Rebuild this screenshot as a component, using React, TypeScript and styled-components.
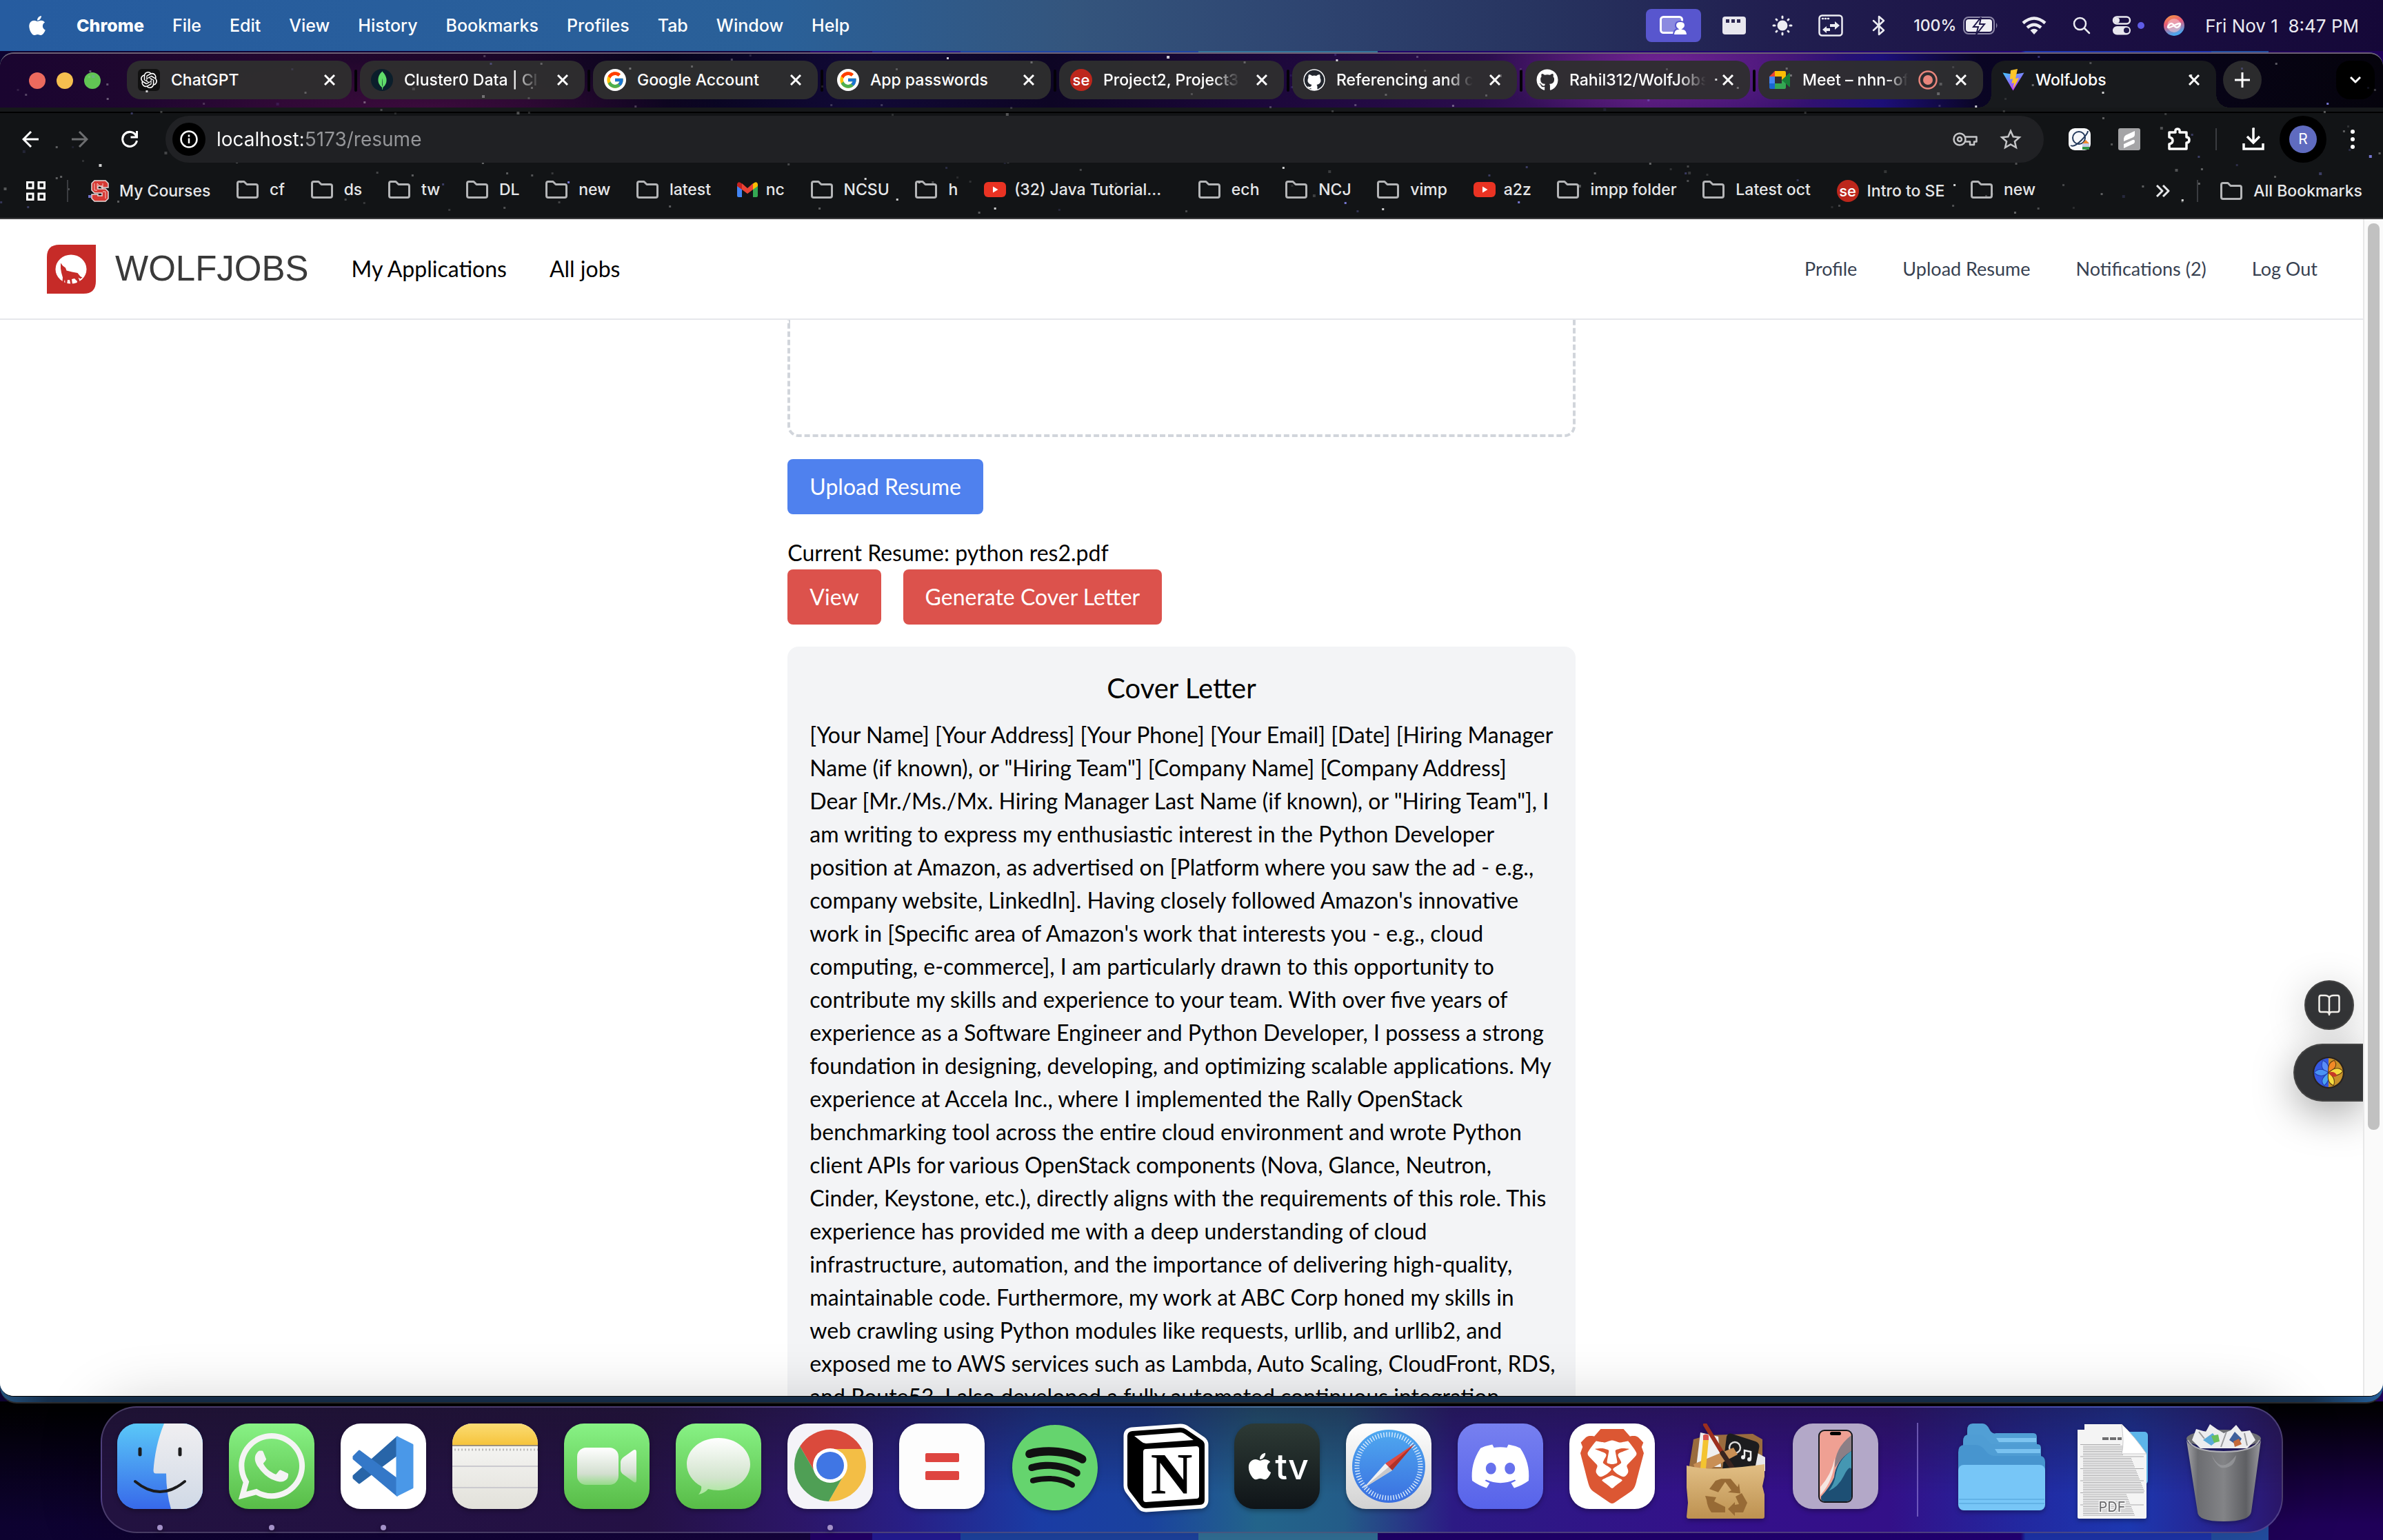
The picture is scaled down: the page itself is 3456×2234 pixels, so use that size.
import React from "react";
import styled, { createGlobalStyle, css } from "styled-components";
import { FaApple, FaSpotify, FaDiscord, FaWhatsapp, FaGithub } from "react-icons/fa";
import { FcGoogle } from "react-icons/fc";
import { SiBrave, SiOpenai, SiMongodb } from "react-icons/si";

const UI = `Inter, "Liberation Sans", sans-serif`;
const BODY = `Lato, "Open Sans", sans-serif`;

const Global = createGlobalStyle`
  *, *::before, *::after { box-sizing: border-box; }
  body { margin: 0; overflow: hidden; }
  button, input { font: inherit; color: inherit; border: 0; background: none; padding: 0; margin: 0; }
  a { color: inherit; text-decoration: none; }
  ul { list-style: none; margin: 0; padding: 0; }
  h1, h2, p { margin: 0; }
  svg { display: block; flex: none; }
`;

/* ---------- Desktop ---------- */

const Desktop = styled.div`
  height: 100vh;
  display: flex;
  flex-direction: column;
  overflow: hidden;
  font-family: ${UI};
  background:
    linear-gradient(180deg, transparent 91%, #000 91%, rgba(0, 0, 0, 0.9) 92%, rgba(0, 0, 0, 0.35) 96%, transparent 99%),
    linear-gradient(90deg, #0d0230 0, #16043f 34%, #24006c 34%, #24006c 36.6%, #251c9a 36.6%, #251c9a 40.3%,
      #1e45a5 40.3%, #1e45a5 50.3%, #34749c 50.3%, #34749c 57.8%, #20006c 57.8%, #24007a 84.8%, #1e35b0 85%,
      #1e35b0 92.8%, #2450a5 92.8%, #2450a5 95.2%, #1f0058 95.2%);
`;

const MenuBar = styled.header`
  flex: none;
  height: 74px;
  padding: 0 35px 0 38px;
  display: flex;
  align-items: center;
  justify-content: space-between;
  color: #fff;
  font-size: 25px;
  font-weight: 500;
  background: linear-gradient(90deg, #265ca0 0, #2a6098 33%, #34557d 45%, #2e4470 55%, #27335f 65%, #211f50 74%, #1b1044 87%, #150838);
`;

const MenuList = styled.nav`
  display: flex;
  align-items: center;
  gap: 41px;
  text-shadow: 0 3px 6px rgba(0, 0, 0, 0.3);
`;

const MenuItem = styled.button<{ $bold?: boolean }>`
  font-weight: ${(p) => (p.$bold ? 800 : 500)};
`;

const StatusList = styled.div`
  display: flex;
  align-items: center;
  gap: 28px;
  color: #ececf2;
`;

const StatusIcon = styled.span<{ $w: number }>`
  width: ${(p) => p.$w}px;
  display: flex;
  justify-content: center;
`;

const SharePill = styled.button`
  width: 80px;
  height: 48px;
  border-radius: 8px;
  display: grid;
  place-items: center;
  background: #5856ce;
`;

const Battery = styled.span`
  display: flex;
  align-items: center;
  gap: 10px;
  font-size: 23px;
`;

const Clock = styled.time`
  white-space: pre;
  font-size: 26px;
  font-weight: 400;
`;

/* ---------- Browser window ---------- */

const Backdrop = styled.div`
  flex: 1;
  min-height: 0;
  display: flex;
  flex-direction: column;
  margin-top: 2px;
  padding-bottom: 8px;
  border-bottom: 2px solid #2a2a2c;
  border-radius: 20px 20px 24px 24px;
  background: linear-gradient(90deg, #24527e 0, #16304d 2%, #16304d 97%, #24609c);
`;

const BrowserWindow = styled.main`
  flex: 1;
  min-height: 0;
  display: flex;
  flex-direction: column;
  overflow: hidden;
  border-radius: 20px;
  border-top: 2px solid #6d6074;
  border-bottom: 1px solid #000;
  background: #fff;
`;

const Chrome = styled.div`
  position: relative;
  flex: none;
  color: #fff;
  background: #121416;
`;

const StarLayer = styled.svg`
  position: absolute;
  inset: 0;
  width: 100%;
  height: 100%;
  pointer-events: none;
`;

const TabStrip = styled.div`
  height: 78px;
  padding: 10px 12px 0 42px;
  display: flex;
  align-items: flex-start;
  background:
    radial-gradient(ellipse 420px 70px at 18% 100%, rgba(110, 20, 90, 0.35), transparent),
    radial-gradient(ellipse 260px 90px at 70% 20%, rgba(150, 45, 180, 0.5), transparent),
    linear-gradient(90deg, #1a0530 0, #24072f 12%, #1b0628 22%, #07041c 28%, #110936 36%, #0d0524 44%, #1a0738 52%,
      #2a0d4c 62%, #4a1870 69%, #38126e 75%, #1c0f78 79%, #0a0524 83%, #05030c);
`;

const Lights = styled.div`
  display: flex;
  gap: 16px;
  margin: 17px 38px 0 0;
`;

const Light = styled.button<{ $color: string }>`
  width: 24px;
  height: 24px;
  border-radius: 50%;
  background: ${(p) => p.$color};
`;

const TabList = styled.div`
  display: flex;
  gap: 12px;
  min-width: 0;
`;

const Tab = styled.div<{ $active?: boolean; $divider?: boolean }>`
  position: relative;
  flex: 0 1 326px;
  width: 326px;
  min-width: 0;
  height: 56px;
  padding: 0 16px;
  display: flex;
  align-items: center;
  border-radius: 20px;
  font-size: 23px;
  font-weight: 500;
  background: rgba(46, 46, 46, 0.95);
  ${(p) =>
    p.$divider &&
    css`
      &::after {
        content: "";
        position: absolute;
        right: -8px;
        top: 13px;
        width: 4px;
        height: 32px;
        border-radius: 2px;
        background: #040208;
      }
    `}
  ${(p) =>
    p.$active &&
    css`
      height: 68px;
      padding-bottom: 12px;
      border-radius: 20px 20px 0 0;
      background: #181a1d;
      &::before,
      &::after {
        content: "";
        position: absolute;
        bottom: 0;
        width: 20px;
        height: 20px;
      }
      &::before {
        left: -20px;
        background: radial-gradient(circle at 0 0, transparent 20px, #181a1d 20px);
      }
      &::after {
        right: -20px;
        background: radial-gradient(circle at 100% 0, transparent 20px, #181a1d 20px);
      }
    `}
`;

const TabTitle = styled.span<{ $fade?: boolean }>`
  flex: 1;
  min-width: 0;
  margin: 0 12px 0 16px;
  overflow: hidden;
  white-space: nowrap;
  ${(p) => p.$fade && `mask-image: linear-gradient(90deg, #000 78%, transparent 98%);`}
`;

const TabAudio = styled.svg`
  margin-right: 18px;
`;

const TabClose = styled.button`
  width: 32px;
  height: 32px;
  display: grid;
  place-items: center;
`;

const Favicon = styled.span<{ $bg?: string; $radius?: string }>`
  flex: none;
  width: 32px;
  height: 32px;
  display: grid;
  place-items: center;
  overflow: hidden;
  border-radius: ${(p) => p.$radius || "50%"};
  background: ${(p) => p.$bg || "transparent"};
  color: #fff;
  font-size: 22px;
  font-weight: 500;
  line-height: 26px;
`;

const StripButton = styled.button<{ $dark?: boolean }>`
  position: relative;
  width: 56px;
  height: 56px;
  display: grid;
  place-items: center;
  margin-left: ${(p) => (p.$dark ? "auto" : "10px")};
  border-radius: ${(p) => (p.$dark ? "20px" : "50%")};
  background: ${(p) => (p.$dark ? "#000" : "#2b2b2d")};
`;

const StripEdge = styled.div`
  height: 8px;
  background: #16181a;
  border-bottom: 2px solid #000;
`;

const NavRow = styled.div`
  position: relative;
  height: 72px;
  padding: 4px 8px 0;
  display: flex;
  align-items: center;
`;

const NavButton = styled.button<{ $dim?: boolean }>`
  width: 72px;
  height: 68px;
  display: grid;
  place-items: center;
  color: ${(p) => (p.$dim ? "#6d6e70" : "#fff")};
`;

const Divider = styled.span<{ $cell?: number }>`
  flex: none;
  width: ${(p) => p.$cell || 2}px;
  height: 32px;
  background: linear-gradient(#3a3c40, #3a3c40) center / 2px 100% no-repeat;
`;

const Omnibox = styled.label`
  flex: 1;
  height: 68px;
  margin: 0 16px;
  padding: 0 32px 0 10px;
  display: flex;
  align-items: center;
  gap: 32px;
  border-radius: 34px;
  background: #202124;
  color: #c4c5c7;
`;

const InfoBadge = styled.span`
  flex: none;
  width: 48px;
  height: 48px;
  margin-right: -16px;
  display: grid;
  place-items: center;
  border-radius: 50%;
  background: #000;
  color: #fff;
`;

const Url = styled.input`
  flex: 1;
  min-width: 0;
  outline: 0;
  font-size: 28px;
  color: #9a9b9e;
  background: linear-gradient(90deg, #fff 125px, #96979a 125px);
  background-clip: text;
  -webkit-background-clip: text;
  -webkit-text-fill-color: transparent;
`;

const Avatar = styled.button`
  width: 68px;
  height: 68px;
  margin: 0 2px;
  display: grid;
  place-items: center;
  border-radius: 50%;
  background: #000;
`;

const AvatarFace = styled.span`
  width: 40px;
  height: 40px;
  border-radius: 50%;
  background: #5f6bbf;
  font-size: 21px;
  line-height: 40px;
  text-align: center;
`;

const BookmarkBar = styled.nav`
  position: relative;
  height: 82px;
  padding: 2px 30px 0 36px;
  display: flex;
  align-items: center;
  border-bottom: 2px solid #3c3c3e;
  color: #e6e7e9;
  font-size: 23px;
  font-weight: 500;
`;

const AppsButton = styled.button`
  width: 32px;
  display: grid;
  place-items: center;
  margin-right: 29px;
`;

const Bookmarks = styled.ul`
  flex: 1;
  min-width: 0;
  margin: 0 174px 0 30px;
  display: flex;
  justify-content: space-between;
`;

const Bookmark = styled.a<{ $tight?: boolean }>`
  display: flex;
  align-items: center;
  gap: ${(p) => (p.$tight ? 12 : 16)}px;
  white-space: nowrap;
`;

const BookmarkCell = styled.li<{ $wide?: boolean }>`
  margin-right: ${(p) => (p.$wide ? 16 : 0)}px;
`;

const MoreButton = styled.button`
  width: 28px;
  margin-right: 32px;
`;

const AllBookmarks = styled(Bookmark)`
  margin-left: 32px;
`;

/* ---------- Page ---------- */

const PageRow = styled.div`
  flex: 1;
  min-height: 0;
  display: flex;
`;

const Page = styled.div`
  position: relative;
  flex: 1;
  min-width: 0;
  display: flex;
  flex-direction: column;
  overflow: hidden;
  background: #fff;
  color: #000;
  font-family: ${BODY};
  font-size: 32px;
  line-height: 48px;
`;

const ScrollTrack = styled.div`
  width: 29px;
  padding: 6px 5px;
  border-left: 2px solid #e8e8e8;
  background: #fafafa;
`;

const ScrollThumb = styled.div`
  height: 77.6%;
  border-radius: 8px;
  background: #c1c1c1;
`;

const SiteHeader = styled.header`
  flex: none;
  height: 146px;
  padding: 0 66px 0 68px;
  display: flex;
  align-items: center;
  justify-content: space-between;
  border-bottom: 2px solid #e5e7eb;
`;

const SiteNav = styled.nav<{ $small?: boolean }>`
  display: flex;
  align-items: center;
  gap: ${(p) => (p.$small ? 66 : 62)}px;
  ${(p) => p.$small && `font-size: 27px; color: #374151;`}
`;

const Brand = styled.a`
  display: flex;
  align-items: center;
  gap: 28px;
  font-family: "Liberation Sans", Arial, sans-serif;
  font-size: 51px;
  color: #3a3a3a;
`;

const Column = styled.section`
  flex: 1;
  min-height: 0;
  width: 33.333%;
  margin: 0 auto;
`;

const DropZone = styled.div`
  height: 170px;
  margin-bottom: 32px;
  border: 4px dashed #d1d5db;
  border-top: 0;
  border-radius: 0 0 16px 16px;
`;

const Button = styled.button<{ $tone: "blue" | "red" }>`
  height: 80px;
  padding: 0 32px;
  border-radius: 8px;
  color: #fff;
  background: ${(p) => (p.$tone === "blue" ? "#4f81ee" : "#dc524c")};
`;

const ButtonRow = styled.div`
  display: flex;
  gap: 32px;
  margin-bottom: 32px;
`;

const Letter = styled.article`
  padding: 32px;
  border-radius: 16px;
  background: #f3f4f6;
`;

const LetterTitle = styled.h2`
  margin-bottom: 16px;
  font-size: 40px;
  font-weight: 400;
  line-height: 56px;
  text-align: center;
`;

const LetterText = styled.p`
  white-space: pre;
`;

const Floating = styled.aside`
  position: absolute;
  right: 0;
  bottom: 427px;
  display: flex;
  flex-direction: column;
  align-items: flex-end;
  gap: 20px;
`;

const ReaderButton = styled.button`
  width: 72px;
  height: 72px;
  margin-right: 13px;
  display: grid;
  place-items: center;
  border-radius: 50%;
  border: 2px solid #444;
  background: #333436;
  box-shadow: 0 10px 60px rgba(0, 0, 0, 0.2);
`;

const SideTab = styled.button`
  width: 101px;
  height: 84px;
  padding-left: 26px;
  display: flex;
  align-items: center;
  border: 2px solid #444;
  border-right: 0;
  border-radius: 42px 0 0 42px;
  background: #333436;
  box-shadow: 0 16px 60px rgba(0, 0, 0, 0.35);
`;

/* ---------- Dock ---------- */

const DockArea = styled.footer`
  position: relative;
  flex: none;
  padding: 4px 0 10px;
  display: flex;
  justify-content: center;
`;

const DockBar = styled.nav`
  height: 184px;
  padding: 0 22px;
  display: flex;
  align-items: center;
  gap: 38px;
  border: 2px solid rgba(150, 140, 190, 0.35);
  border-radius: 52px;
  box-shadow: 0 0 90px rgba(0, 0, 0, 0.22);
  background:
    linear-gradient(180deg, rgba(25, 18, 35, 0.45), transparent 70%),
    linear-gradient(90deg, #221240 0, #241145 25%, #2c1668 32%, #281f86 37%, #1a3ca4 43%, #1a429e 48%, #23648a 53%,
      #235c88 57%, #2c1a84 62%, #34108a 75%, #331088 82%, #2228a0 88%, #1c38b0 93%, #2a1f88 98%, #2a1668);
`;

const DockItem = styled.button<{ $running?: boolean }>`
  position: relative;
  width: 124px;
  height: 124px;
  display: grid;
  place-items: center;
  margin-bottom: 10px;
  filter: drop-shadow(0 3px 3px rgba(0, 0, 0, 0.3));
  ${(p) =>
    p.$running &&
    css`
      &::after {
        content: "";
        position: absolute;
        left: 58px;
        bottom: -31px;
        width: 8px;
        height: 8px;
        border-radius: 50%;
        background: #a391c8;
      }
    `}
`;

const Tile = styled.span<{ $bg: string }>`
  width: 124px;
  height: 124px;
  display: flex;
  align-items: center;
  justify-content: center;
  overflow: hidden;
  border-radius: 29px;
  color: #fff;
  font-size: 52px;
  font-weight: 500;
  background: ${(p) => p.$bg};
`;

const DockDivider = styled.span`
  width: 39px;
  height: 136px;
  background: linear-gradient(rgba(150, 130, 220, 0.6), rgba(150, 130, 220, 0.6)) center / 2px 100% no-repeat;
`;

/* ---------- Small glyphs ---------- */

const stroke = { fill: "none", stroke: "currentColor", strokeLinecap: "round", strokeLinejoin: "round" } as const;

const Cross = () => (
  <svg width="16" height="16" viewBox="0 0 16 16" {...stroke} strokeLinecap="butt" strokeWidth="3">
    <path d="M1 1l14 14M15 1L1 15" />
  </svg>
);

const FolderIcon = () => (
  <svg width="32" height="26" viewBox="0 0 32 26" fill="none" stroke="#b4b5b7" strokeWidth="3" strokeLinejoin="round">
    <path d="M1.500 22V4Q1.500 1.500 4 1.500H11L15 5.500H28Q30.500 5.500 30.500 8V22Q30.500 24.500 28 24.500H4Q1.500 24.500 1.500 22Z" />
  </svg>
);

const GitCat = ({ inverted = false }) => (
  <Favicon $bg={inverted ? "#22262e" : "transparent"}>
    {inverted ? (
      <svg width="32" height="32" viewBox="0 0 32 32">
        <circle cx="16" cy="16" r="15" fill="#22262e" stroke="#fff" strokeWidth="1.500" />
        <path d="M8 8q3 0 5 2 3-.8 6 0 2-2 5-2 1 3 .5 5 1.500 2 1 5-.8 4-6 5 1 1 1 3v5h-9v-3q-4 1-5-3 3 2 5 0 0-1 1-2-5-1-6-5-.4-3 1-5Q7 11 8 8z" fill="#fff" />
      </svg>
    ) : (
      <FaGithub size={32} color="#fff" />
    )}
  </Favicon>
);

const YoutubeIcon = () => (
  <svg width="32" height="22" viewBox="0 0 32 22">
    <rect width="32" height="22" rx="6" fill="#ea3323" />
    <path d="M13 6.500l7.500 4.500-7.500 4.500z" fill="#fff" />
  </svg>
);

const GmailIcon = () => (
  <svg width="30" height="22" viewBox="0 0 30 22">
    <path d="M0 4v16q0 2 2 2h5V10z" fill="#4285f4" />
    <path d="M30 4v16q0 2-2 2h-5V10z" fill="#34a853" />
    <path d="M23 2l-8 7-8-7v9l8 6 8-6z" fill="#ea4335" />
    <path d="M0 3q1-4 5-2l2 1.500V11L0 6z" fill="#c5221f" />
    <path d="M30 3q-1-4-5-2l-2 1.500V11l7-5z" fill="#fbbc04" />
  </svg>
);

const StateIcon = () => (
  <svg width="32" height="32" viewBox="0 0 32 32">
    <path d="M8 1h16l4 4v6h-9v-2h-6v4h11l4 4v10l-4 4H8l-4-4v-6h9v2h6v-4H8l-4-4V5z" fill="#d63a34" stroke="#e8dcdc" strokeWidth="1.500" />
    <path d="M12 13V5l8 8V5M8 5v10h4M24 27V17h-4" fill="none" stroke="#f6c9c4" strokeWidth="1" />
  </svg>
);

const MeetIcon = () => (
  <svg width="32" height="26" viewBox="0 0 32 26">
    <path d="M8 0v8H0z" fill="#ea4335" />
    <path d="M8 0h14q2 0 2 2v8l-6 4V8H8z" fill="#fbbc04" />
    <path d="M0 8h8v10H0z" fill="#4285f4" />
    <path d="M0 18h8v8H2q-2 0-2-2z" fill="#1967d2" />
    <path d="M8 18h10v-5l6 4v7q0 2-2 2H8z" fill="#34a853" />
    <path d="M18 13l11-10q1-1 1 1v18q0 2-1 1z" fill="#188038" />
  </svg>
);

const ViteIcon = () => (
  <svg width="32" height="32" viewBox="0 0 32 32">
    <defs>
      <linearGradient id="vite" x1="0" y1="0" x2="0.5" y2="1">
        <stop offset="0" stopColor="#41c8ff" />
        <stop offset="1" stopColor="#bd34fe" />
      </linearGradient>
    </defs>
    <path d="M.5 5.500L15.500 31.500 31.500 5.500l-15 2.500z" fill="url(#vite)" />
    <path d="M22 0L12 2l-1 13 4-.8L13.500 21l3.500-1-1.500 9L24 13l-5 1 3-14z" fill="#ffc628" />
  </svg>
);

const WolfLogo = () => (
  <svg width="71" height="71" viewBox="0 0 71 71">
    <path d="M18 0H71V53Q71 71 53 71H0V18Q0 0 18 0Z" fill="#c62b28" />
    <ellipse cx="35" cy="35.500" rx="22.500" ry="21" fill="#fff" />
    <path
      d="M20 26.500l3 4 4 3 1.500 4 8 2 8 1.500 4 5 3 1.500-3 2-3-2 2 5-2.500 5-2 1.500 1-6-4-4-4 1 1 8-2 2-2-9-3 0-1 7-2 1.500-1-9-2 7-2 1 1-11-2-7-1-6z"
      fill="#c62b28"
    />
  </svg>
);

/* ---------- Dock drawings ---------- */

const Finder = () => (
  <svg width="124" height="124" viewBox="0 0 124 124">
    <defs>
      <linearGradient id="fb" x1="0" y1="0" x2="0" y2="1">
        <stop offset="0" stopColor="#5ac8f8" />
        <stop offset="1" stopColor="#3769ea" />
      </linearGradient>
      <linearGradient id="fw" x1="0" y1="0" x2="0" y2="1">
        <stop offset="0" stopColor="#f0eff1" />
        <stop offset="1" stopColor="#d0d9e6" />
      </linearGradient>
    </defs>
    <rect width="124" height="124" fill="url(#fb)" />
    <path d="M68 0C58 24 54 48 52.500 68Q52.500 72.500 56 72.500H71Q71 100 78 124H124V0Z" fill="url(#fw)" />
    <g fill="none" stroke="#1b1b1d" strokeWidth="5" strokeLinecap="round">
      <path d="M33 37v8M91 37v8" />
      <path d="M26 84Q62 114 98 84" strokeWidth="4" />
    </g>
  </svg>
);

const VsCode = () => (
  <svg width="124" height="124" viewBox="0 0 124 124" strokeLinejoin="round" strokeWidth="3">
    <path d="M82 20V45L27 86 19 79V76Z" fill="#2865a8" stroke="#2865a8" />
    <path d="M19 48L27 40 82 81V104L19 51Z" fill="#3478c8" stroke="#3478c8" />
    <path d="M82 20L104 31V93L82 104Z" fill="#4a98e8" stroke="#4a98e8" />
  </svg>
);

const Notes = () => (
  <svg width="124" height="124" viewBox="0 0 124 124">
    <defs>
      <linearGradient id="ny" x1="0" y1="0" x2="0" y2="1">
        <stop offset="0" stopColor="#fbdc74" />
        <stop offset="1" stopColor="#f6c43c" />
      </linearGradient>
    </defs>
    <rect width="124" height="31" fill="url(#ny)" />
    <rect y="31" width="124" height="2" fill="#9c917c" />
    <path d="M3 38H124" stroke="#bdbcba" strokeWidth="3" strokeDasharray="2 3" />
    <path d="M0 62H124M0 93H124" stroke="#cbcacf" strokeWidth="2" />
  </svg>
);

const Camera = () => (
  <svg width="124" height="124" viewBox="0 0 124 124">
    <defs>
      <linearGradient id="cam" x1="0" y1="0" x2="0" y2="1">
        <stop offset="0" stopColor="#fff" />
        <stop offset="0.7" stopColor="#d3dfd0" />
        <stop offset="1" stopColor="#96db8a" />
      </linearGradient>
    </defs>
    <rect x="19" y="35" width="60" height="54" rx="13" fill="url(#cam)" />
    <path d="M82 57Q82 52 86 49L100 39Q105 36 105 42V82Q105 88 100 84L86 74Q82 71 82 67Z" fill="url(#cam)" />
  </svg>
);

const Bubble = () => (
  <svg width="124" height="124" viewBox="0 0 124 124">
    <defs>
      <linearGradient id="bub" x1="0" y1="0" x2="0" y2="1">
        <stop offset="0" stopColor="#fff" />
        <stop offset="0.7" stopColor="#d2e4cd" />
        <stop offset="1" stopColor="#aae89c" />
      </linearGradient>
    </defs>
    <path d="M62 21C88 21 108 38 108 59S88 97 62 97Q54 97 47 95 42 101 33 103 38 97 37 91C24 84 16 72 16 59 16 38 36 21 62 21Z" fill="url(#bub)" />
  </svg>
);

const SECTOR = "M-43.900-27.900A52 52 0 0 1 46.100-24H0A24 24 0 0 0-20.800 12Z";
const ChromeLogo = () => (
  <svg width="124" height="124" viewBox="-62 -62 124 124">
    <g transform="translate(0 -1)">
      <path d={SECTOR} fill="#da4a3c" />
      <path d={SECTOR} fill="#f3be45" transform="rotate(120)" />
      <path d={SECTOR} fill="#4f9f55" transform="rotate(240)" />
      <circle r="25" fill="#fff" />
      <circle r="20" fill="#4076e4" />
    </g>
  </svg>
);

const Bars = () => (
  <svg width="124" height="124" viewBox="0 0 124 124" fill="#de4540">
    <rect x="38" y="43" width="49" height="13" rx="2" />
    <rect x="38" y="69" width="49" height="13" rx="2" />
  </svg>
);

const NotionLetter = styled.text`
  font-family: "Liberation Serif", "Times New Roman", serif;
  font-size: 84px;
  font-weight: 700;
  fill: #000;
`;

const Notion = () => (
  <svg width="126" height="130" viewBox="0 0 126 130">
    <path
      d="M7 18Q7 12 14 11L84 6Q89 6 93 9L115 24Q119 27 119 31V111Q119 118 112 118L34 123Q29 123 26 119L10 98Q7 94 7 90Z"
      fill="#000"
      stroke="#fff"
      strokeWidth="11"
      strokeLinejoin="round"
      paintOrder="stroke"
    />
    <path d="M17 18L84 13Q87 13 90 15L103 24 34 29Q30 29 27 26Z" fill="#fff" />
    <path d="M34 37L107 33Q111 33 111 37V105Q111 109 107 109L34 114Q30 114 30 110V41Q30 37 34 37Z" fill="#fff" />
    <NotionLetter x="71" y="102" textAnchor="middle">
      N
    </NotionLetter>
  </svg>
);

const Spotify = () => (
  <svg width="128" height="128" viewBox="0 0 128 128">
    <circle cx="64" cy="64" r="58" fill="#111" />
    <FaSpotify color="#65d46e" size={128} />
  </svg>
);

const Safari = () => (
  <svg width="124" height="124" viewBox="-62 -62 124 124">
    <defs>
      <linearGradient id="saf" x1="0" y1="0" x2="0" y2="1">
        <stop offset="0" stopColor="#4fa9f0" />
        <stop offset="1" stopColor="#3a6fe0" />
      </linearGradient>
    </defs>
    <circle r="53" fill="url(#saf)" />
    <circle r="46" fill="none" stroke="#dcecfb" strokeWidth="7" strokeDasharray="1.400 2.614" />
    <path d="M37-32L5 6-5-4Z" fill="#e04a40" />
    <path d="M-37 32L5 6-5-4Z" fill="#f1f1f1" />
    <path d="M37-32L5 6 0 1Z" fill="#b03229" />
    <path d="M-37 32L5 6 0 1Z" fill="#c8c8ca" />
  </svg>
);

const Bag = () => (
  <svg width="124" height="140" viewBox="-4 3 124 140">
    <defs>
      <linearGradient id="bag" x1="0" y1="0" x2="0" y2="1">
        <stop offset="0" stopColor="#e2bf85" />
        <stop offset="1" stopColor="#bd9150" />
      </linearGradient>
    </defs>
    <path d="M14 26L34 20 100 18 114 26V70H7Z" fill="#9a6c3e" />
    <path d="M24 16L50 22 54 66H18Z" fill="#efefef" />
    <path d="M96 40L118 52V72H90Z" fill="#e8e8ea" />
    <path d="M62 22Q64 16 70 18L104 29Q111 32 109 39L104 64Q102 70 96 70H56Z" fill="#1c1c1e" />
    <circle cx="74" cy="38" r="8" fill="none" stroke="#ddd" strokeWidth="2.500" />
    <path d="M88 51V42L97 44V54" fill="none" stroke="#eee" strokeWidth="2.500" />
    <circle cx="86" cy="52" r="3" fill="#eee" />
    <circle cx="95" cy="55" r="3" fill="#eee" />
    <path d="M14 62L72 38 78 48 40 68H16Z" fill="#c98f55" />
    <path d="M28 26H36L32 68H24Z" fill="#f4c430" />
    <path d="M28 20Q32 17 36 20V27H28Z" fill="#d9534f" />
    <path d="M31 5L56 46" stroke="#9c2f1e" strokeWidth="6" strokeLinecap="round" />
    <path d="M56 46L72 70" stroke="#3a2520" strokeWidth="7" strokeLinecap="round" />
    <path d="M4 64Q30 70 60 68T117 62V80L114 94 117 106V138Q117 141 114 141H7Q4 141 4 138L6 118 4 96Z" fill="url(#bag)" />
    <g fill="#976a35">
      <path d="M46 86L54 83H68L78 96 80 90 82 106 64 104 69 101 60 88 50 104 37 99Z" transform="translate(0 6) scale(1 .93)" />
      <path d="M31 108L47 110 44 116 60 124V132H40Q34 124 33 114Z" />
      <path d="M84 104L92 118 86 132H74V137L64 127 74 117V121L80 120 75 109Z" />
    </g>
  </svg>
);

const Phone = () => (
  <svg width="124" height="124" viewBox="0 0 124 124">
    <rect x="37" y="9" width="50" height="106" rx="9" fill="#16181c" />
    <rect x="39" y="11" width="46" height="102" rx="7" fill="#efa093" />
    <path d="M85 17V42Q70 50 61 64 60 36 85 17Z" fill="#8c7f86" />
    <path d="M85 40Q62 54 60 78 54 92 41 106V110Q42 113 46 113H78Q85 113 85 106Z" fill="#1d4f74" />
    <path d="M85 40Q66 52 62 76 60 88 52 98 66 92 74 76T85 66Z" fill="#4597b2" />
    <path d="M61 50Q60 82 40 104V92Q56 74 61 50Z" fill="#f5e6e2" />
    <rect x="54" y="12" width="16" height="5" rx="2.500" fill="#000" />
  </svg>
);

const Folders = () => (
  <svg width="128" height="128" viewBox="0 0 128 128">
    <path d="M14 10Q14 0 22 0H36Q42 0 46 8T56 14H110Q115 14 115 20V60H14Z" fill="#519fd5" />
    <path d="M56 21H114V27H60Z" fill="#7dc4f0" />
    <path d="M8 26Q8 16 16 16H32Q38 16 43 24T54 30H116Q121 30 121 36V60H8Z" fill="#4f9dd4" />
    <path d="M54 37H120V43H58Z" fill="#79c2f0" />
    <path d="M1 42Q1 31 10 31H26Q34 31 40 39T54 47H119Q127 47 127 56V80H1Z" fill="#4795cf" />
    <rect x="1" y="60" width="126" height="66" rx="8" fill="#77c6f7" />
    <path d="M2 110H126M2 116H126" stroke="#62b2e6" strokeWidth="2" />
  </svg>
);

const LINES = Array.from({ length: 42 }, (_, i) => ({
  x: i % 7 === 0 ? 16 : 20,
  w: i % 7 === 0 ? 92 : 62 + ((i * 29) % 28),
  y: 30 + i * 2.5,
}));
const PdfLabel = styled.text`
  font-family: ${UI};
  font-size: 20px;
  fill: #6b6b6d;
`;
const Pdf = () => (
  <svg width="124" height="140" viewBox="0 0 124 140">
    <rect x="12" y="12" width="102" height="76" rx="5" fill="#5db5ea" />
    <path d="M22 1H76L112 44V136Q112 138 110 138H14Q12 138 12 136V9H22Z" fill="#f4f4f4" />
    <path d="M48 22H76" stroke="#6e6e70" strokeWidth="4" strokeDasharray="9 2" />
    {LINES.map((l) => (
      <rect key={l.y} x={l.x} y={l.y} width={l.y < 46 ? Math.min(l.w, 58) : l.w} height="1" fill="#a9a9ab" />
    ))}
    <path d="M76 1Q80 30 76 44L112 44Q96 20 76 1Z" fill="#fff" stroke="#c9c9cb" />
    <PdfLabel x="62" y="128" textAnchor="middle" stroke="#f4f4f4" strokeWidth="3" paintOrder="stroke">
      PDF
    </PdfLabel>
  </svg>
);

const Trash = () => (
  <svg width="124" height="144" viewBox="0 0 124 144">
    <defs>
      <linearGradient id="tr" x1="0" x2="1" y1="0" y2="0">
        <stop offset="0" stopColor="#a4a4a8" />
        <stop offset="0.15" stopColor="#6c6d71" />
        <stop offset="0.5" stopColor="#838487" />
        <stop offset="0.8" stopColor="#5e5f63" />
        <stop offset="1" stopColor="#9a9a9f" />
      </linearGradient>
    </defs>
    <ellipse cx="62" cy="22" rx="54" ry="13" fill="#6e6f73" />
    <path d="M16 24L22 8 36 12 42 1 52 8 62 14 72 10 80 2 88 12 100 10 108 24 96 36 28 36Z" fill="#ececee" />
    <path d="M32 24L46 14 54 24 44 32Z" fill="#5aa9d8" />
    <path d="M44 18l10-2 2 10-8 2z" fill="#6abf5a" />
    <path d="M70 24L78 12 88 22 82 32Z" fill="#3f5f9a" />
    <path d="M76 26l8-4 4 8-10 4z" fill="#c56a3a" />
    <path d="M58 34l8-22M92 14l4 18M26 12l8 10" stroke="#9a9a9c" strokeWidth="2" />
    <path d="M8 24Q14 40 62 40T116 24L102 128Q100 142 62 142T24 128Z" fill="url(#tr)" />
    <path d="M10 24Q18 41 62 41T114 24" fill="none" stroke="#b0b0b5" strokeWidth="2" />
    <path d="M44 44Q58 76 80 46 78 66 58 64 48 58 44 44Z" fill="#a2a3a7" opacity="0.6" />
  </svg>
);

/* ---------- Data ---------- */

type TabInfo = { title: string; icon: React.ReactNode; fade?: boolean; active?: boolean; audio?: boolean };

const google = (
  <Favicon $bg="#fff">
    <FcGoogle size={28} />
  </Favicon>
);
const se = <Favicon $bg="#bd271c">se</Favicon>;

const tabs: TabInfo[] = [
  { title: "ChatGPT", icon: <Favicon $bg="#111" $radius="6px"><SiOpenai size={24} /></Favicon> },
  { title: "Cluster0 Data | Cl", icon: <Favicon $bg="#0b1e2b"><SiMongodb size={27} color="#5fdc6a" /></Favicon>, fade: true },
  { title: "Google Account", icon: google },
  { title: "App passwords", icon: google },
  { title: "Project2, Project3", icon: se, fade: true },
  { title: "Referencing and c", icon: <GitCat inverted />, fade: true },
  { title: "Rahil312/WolfJobs", icon: <GitCat />, fade: true },
  { title: "Meet – nhn-of", icon: <Favicon $radius="0"><MeetIcon /></Favicon>, fade: true, audio: true },
  { title: "WolfJobs", icon: <Favicon $radius="0"><ViteIcon /></Favicon>, active: true },
];

const folder = <FolderIcon />;
const bookmarks: { label: string; icon: React.ReactNode; wide?: boolean }[] = [
  { label: "My Courses", icon: <StateIcon /> },
  { label: "cf", icon: folder },
  { label: "ds", icon: folder },
  { label: "tw", icon: folder },
  { label: "DL", icon: folder },
  { label: "new", icon: folder },
  { label: "latest", icon: folder },
  { label: "nc", icon: <GmailIcon /> },
  { label: "NCSU", icon: folder },
  { label: "h", icon: folder },
  { label: "(32) Java Tutorial...", icon: <YoutubeIcon />, wide: true },
  { label: "ech", icon: folder },
  { label: "NCJ", icon: folder },
  { label: "vimp", icon: folder },
  { label: "a2z", icon: <YoutubeIcon /> },
  { label: "impp folder", icon: folder },
  { label: "Latest oct", icon: folder },
  { label: "Intro to SE", icon: se },
  { label: "new", icon: folder },
];

const letter = [
  "[Your Name] [Your Address] [Your Phone] [Your Email] [Date] [Hiring Manager",
  'Name (if known), or "Hiring Team"] [Company Name] [Company Address]',
  'Dear [Mr./Ms./Mx. Hiring Manager Last Name (if known), or "Hiring Team"], I',
  "am writing to express my enthusiastic interest in the Python Developer",
  "position at Amazon, as advertised on [Platform where you saw the ad - e.g.,",
  "company website, LinkedIn]. Having closely followed Amazon's innovative",
  "work in [Specific area of Amazon's work that interests you - e.g., cloud",
  "computing, e-commerce], I am particularly drawn to this opportunity to",
  "contribute my skills and experience to your team. With over five years of",
  "experience as a Software Engineer and Python Developer, I possess a strong",
  "foundation in designing, developing, and optimizing scalable applications. My",
  "experience at Accela Inc., where I implemented the Rally OpenStack",
  "benchmarking tool across the entire cloud environment and wrote Python",
  "client APIs for various OpenStack components (Nova, Glance, Neutron,",
  "Cinder, Keystone, etc.), directly aligns with the requirements of this role. This",
  "experience has provided me with a deep understanding of cloud",
  "infrastructure, automation, and the importance of delivering high-quality,",
  "maintainable code. Furthermore, my work at ABC Corp honed my skills in",
  "web crawling using Python modules like requests, urllib, and urllib2, and",
  "exposed me to AWS services such as Lambda, Auto Scaling, CloudFront, RDS,",
  "and Route53. I also developed a fully automated continuous integration",
].join("\n");

const GREEN = "linear-gradient(#88f285, #58bc47)";
const dockApps: { name: string; art: React.ReactNode; running?: boolean }[] = [
  { name: "Finder", art: <Tile $bg="#4a9df0"><Finder /></Tile>, running: true },
  { name: "WhatsApp", art: <Tile $bg={GREEN}><FaWhatsapp size={110} color="#f4f4f4" /></Tile>, running: true },
  { name: "Visual Studio Code", art: <Tile $bg="#fff"><VsCode /></Tile>, running: true },
  { name: "Notes", art: <Tile $bg="linear-gradient(#fafafa, #e2e1da)"><Notes /></Tile> },
  { name: "FaceTime", art: <Tile $bg={GREEN}><Camera /></Tile> },
  { name: "Messages", art: <Tile $bg={GREEN}><Bubble /></Tile> },
  { name: "Google Chrome", art: <Tile $bg="#f4f3f8"><ChromeLogo /></Tile>, running: true },
  { name: "Tasks", art: <Tile $bg="#fdfdfd"><Bars /></Tile> },
  { name: "Spotify", art: <Spotify /> },
  { name: "Notion", art: <Notion /> },
  { name: "TV", art: <Tile $bg="linear-gradient(#2d3a35, #0f1418)"><FaApple size={44} />tv</Tile> },
  { name: "Safari", art: <Tile $bg="linear-gradient(#fff, #d2d2d2)"><Safari /></Tile> },
  { name: "Discord", art: <Tile $bg="linear-gradient(#7780f0, #5763ea)"><FaDiscord size={90} /></Tile> },
  { name: "Brave", art: <Tile $bg="#fff"><SiBrave size={108} color="#dc5733" /></Tile> },
  { name: "Bag", art: <Bag /> },
  { name: "iPhone Mirroring", art: <Tile $bg="#b3a8c8"><Phone /></Tile> },
];

/* Scattered stars, repeatable from one render to the next */
const stars = (() => {
  let seed = 7;
  const next = () => (seed = (seed * 16807) % 2147483647) / 2147483647;
  return Array.from({ length: 260 }, () => ({
    x: next() * 100,
    y: Math.round(next() * 232),
    s: next() > 0.85 ? 4 : 3,
    o: next() > 0.88 ? 0.8 : 0.1 + next() * 0.25,
  }));
})();

/* ---------- App ---------- */

export default function App() {
  return (
    <Desktop>
      <Global />
      <MenuBar>
        <MenuList aria-label="Menu bar">
          <FaApple size={32} />
          {["Chrome", "File", "Edit", "View", "History", "Bookmarks", "Profiles", "Tab", "Window", "Help"].map((m, i) => (
            <MenuItem key={m} $bold={i === 0}>
              {m}
            </MenuItem>
          ))}
        </MenuList>
        <StatusList>
          <SharePill aria-label="Screen sharing">
            <svg width="40" height="28" viewBox="0 0 40 28" fill="none">
              <rect x="1.500" y="1.500" width="31" height="23" rx="4" fill="#8b8ae0" stroke="#fff" strokeWidth="3" />
              <path d="M20 28q0-8 6-9-3-2-3-5 0-6 7-6t7 6q0 3-3 5 6 1 6 9z" fill="#fff" stroke="#5856ce" strokeWidth="2" />
            </svg>
          </SharePill>
          <StatusIcon $w={40}>
            <svg width="34" height="26" viewBox="0 0 34 26">
              <rect width="34" height="26" rx="4" fill="#e8e7ee" />
              <path d="M5 4h5v5H5zM13 4h5v5h-5zM21 4h5v5h-5z" fill="#2a2550" />
            </svg>
          </StatusIcon>
          <StatusIcon $w={44}>
            <svg width="30" height="30" viewBox="0 0 30 30" {...stroke} strokeWidth="3">
              <circle cx="15" cy="15" r="6" fill="currentColor" />
              <path d="M15 2v2M15 26v2M2 15h2M26 15h2M6 6l1 1M23 23l1 1M24 6l-1 1M7 23l-1 1" />
            </svg>
          </StatusIcon>
          <StatusIcon $w={40}>
            <svg width="36" height="32" viewBox="0 0 36 32" {...stroke} strokeWidth="2.500">
              <rect x="1.500" y="1.500" width="33" height="29" rx="4" />
              <path d="M6 6h1M10 6h1M14 6h1" />
              <path d="M17 14h7v-4l7 6-7 6v-4h-7zM17 20h-5v-3l-6 5 6 5v-3h5z" fill="currentColor" stroke="none" />
            </svg>
          </StatusIcon>
          <StatusIcon $w={44}>
            <svg width="20" height="30" viewBox="0 0 20 30" {...stroke} strokeWidth="2.500">
              <path d="M2 8l15 14-7 6V2l7 6L2 22" />
            </svg>
          </StatusIcon>
          <Battery>
            100%
            <svg width="51" height="26" viewBox="0 0 51 26">
              <rect x="1" y="1" width="44" height="24" rx="7" fill="none" stroke="#8d88a8" strokeWidth="2" />
              <rect x="4" y="4" width="38" height="18" rx="4" fill="#f0eff4" />
              <path d="M48 9q3 4 0 8z" fill="#8d88a8" />
              <path d="M26 1L15 15h7l-3 11 12-15h-7z" fill="#f0eff4" stroke="#1d1648" strokeWidth="2" />
            </svg>
          </Battery>
          <StatusIcon $w={48}>
            <svg width="36" height="26" viewBox="0 0 36 26" fill="none" stroke="currentColor" strokeWidth="4.500">
              <path d="M2 9.500Q18-4.500 34 9.500M8 16Q18 7.500 28 16" />
              <path d="M18 26l-5.500-6Q18 15.500 23.500 20z" fill="currentColor" stroke="none" />
            </svg>
          </StatusIcon>
          <StatusIcon $w={34}>
            <svg width="26" height="26" viewBox="0 0 26 26" {...stroke} strokeWidth="2.500">
              <circle cx="10.500" cy="10.500" r="8.500" />
              <path d="M17 17l7 7" />
            </svg>
          </StatusIcon>
          <StatusIcon $w={44}>
            <svg width="49" height="28" viewBox="0 0 49 28">
              <rect x="3" y="1.500" width="24" height="10" rx="5" fill="none" stroke="#e8e7ee" strokeWidth="2.500" />
              <circle cx="8" cy="6.500" r="4" fill="#e8e7ee" />
              <rect x="2" y="15" width="26" height="12.500" rx="6.200" fill="#e8e7ee" />
              <circle cx="22" cy="21" r="4" fill="#1d1648" />
              <circle cx="43" cy="14" r="5" fill="#5f5ce6" />
            </svg>
          </StatusIcon>
          <StatusIcon $w={34}>
            <svg width="30" height="30" viewBox="0 0 30 30">
              <defs>
                <linearGradient id="siri" x1="0" y1="0" x2="0.3" y2="1">
                  <stop offset="0" stopColor="#f5a03c" />
                  <stop offset="0.45" stopColor="#ea5a78" />
                  <stop offset="1" stopColor="#4aa8f0" />
                </linearGradient>
              </defs>
              <circle cx="15" cy="15" r="15" fill="url(#siri)" />
              <circle cx="15" cy="15" r="10" fill="#f0c6cf" opacity="0.6" />
              <path d="M15 15Q11 9 7 15t8 0 8 0-8 0" fill="none" stroke="#fff" strokeWidth="2.500" />
            </svg>
          </StatusIcon>
          <Clock>{"Fri Nov 1  8:47 PM"}</Clock>
        </StatusList>
      </MenuBar>

      <Backdrop>
        <BrowserWindow>
          <Chrome>
            <TabStrip>
              <Lights>
                <Light $color="#ec6a5e" aria-label="Close window" />
                <Light $color="#f5bf4f" aria-label="Minimise window" />
                <Light $color="#61c554" aria-label="Zoom window" />
              </Lights>
              <TabList>
                {tabs.map((t, i) => (
                  <Tab key={t.title} $active={t.active} $divider={i < 7}>
                    {t.icon}
                    <TabTitle $fade={t.fade}>{t.title}</TabTitle>
                    {t.audio && (
                      <TabAudio width="28" height="28" viewBox="0 0 28 28">
                        <circle cx="14" cy="14" r="12.500" fill="none" stroke="#e8857c" strokeWidth="2.500" />
                        <circle cx="14" cy="14" r="7" fill="#e8857c" />
                      </TabAudio>
                    )}
                    <TabClose aria-label={`Close ${t.title}`}>
                      <Cross />
                    </TabClose>
                  </Tab>
                ))}
              </TabList>
              <StripButton aria-label="New tab">
                <svg width="22" height="22" viewBox="0 0 22 22" {...stroke} strokeLinecap="butt" strokeWidth="3">
                  <path d="M11 0v22M0 11h22" />
                </svg>
              </StripButton>
              <StripButton $dark aria-label="Search tabs">
                <svg width="16" height="10" viewBox="0 0 16 10" {...stroke} strokeLinecap="butt" strokeWidth="3">
                  <path d="M1 1l7 7 7-7" />
                </svg>
              </StripButton>
            </TabStrip>
            <StripEdge />
            <StarLayer aria-hidden>
              {stars.map((s, i) => (
                <rect key={i} x={`${s.x}%`} y={s.y} width={s.s} height={s.s} fill={i % 5 ? "#fff" : "#8f8fff"} opacity={s.o} />
              ))}
            </StarLayer>
            <NavRow>
              <NavButton aria-label="Back">
                <svg width="24" height="24" viewBox="0 0 24 24" {...stroke} strokeLinecap="butt" strokeLinejoin="miter" strokeWidth="3">
                  <path d="M24 12H3M13 1L2 12l11 11" />
                </svg>
              </NavButton>
              <NavButton $dim aria-label="Forward">
                <svg width="24" height="24" viewBox="0 0 24 24" {...stroke} strokeLinecap="butt" strokeLinejoin="miter" strokeWidth="3">
                  <path d="M0 12h21M11 1l11 11-11 11" />
                </svg>
              </NavButton>
              <NavButton aria-label="Reload">
                <svg width="26" height="26" viewBox="0 0 26 26" {...stroke} strokeLinecap="butt" strokeLinejoin="miter" strokeWidth="3">
                  <path d="M22.500 8A10.500 10.500 0 1 0 23.500 15M23.500 1v9h-9" />
                </svg>
              </NavButton>
              <Omnibox>
                <InfoBadge>
                  <svg width="26" height="26" viewBox="0 0 26 26" {...stroke} strokeLinecap="butt" strokeWidth="2.500">
                    <circle cx="13" cy="13" r="11.500" />
                    <path d="M13 11.500V19M13 6.500V9.500" />
                  </svg>
                </InfoBadge>
                <Url aria-label="Address" defaultValue="localhost:5173/resume" />
                <svg width="36" height="20" viewBox="0 0 36 20" {...stroke} strokeLinecap="butt" strokeWidth="2.500">
                  <circle cx="10" cy="10" r="8.500" />
                  <circle cx="10" cy="10" r="3" />
                  <path d="M18 6.500H34.500V13.500H31V18H25V13.500H18" />
                </svg>
                <svg width="32" height="30" viewBox="0 0 32 30" {...stroke} strokeLinejoin="miter" strokeWidth="2.500">
                  <path d="M16 3l3.700 8.300 9 .9-6.800 6 2 8.800-7.900-4.600L8.100 27l2-8.800-6.800-6 9-.9z" />
                </svg>
              </Omnibox>
              <NavButton aria-label="Web extension">
                <svg width="32" height="32" viewBox="0 0 32 32">
                  <rect width="32" height="32" rx="9" fill="#f7f8fa" />
                  <circle cx="15" cy="14" r="9" fill="none" stroke="#243a5c" strokeWidth="2" />
                  <path d="M3 25Q8 28 18 18T28 4" fill="none" stroke="#243a5c" strokeWidth="2" />
                  <path d="M20 22l5-5 5 5z" fill="#f08a2c" />
                  <rect x="20" y="22" width="10" height="5" fill="#c6cce6" />
                  <rect x="20" y="27" width="10" height="4" fill="#2f9445" />
                </svg>
              </NavButton>
              <NavButton aria-label="Notes extension">
                <svg width="32" height="32" viewBox="0 0 32 32">
                  <rect width="32" height="32" rx="3" fill="#a4a4a6" />
                  <path d="M8 15Q8 12 11 10L24 4V9Q24 12 21 13.500L8 19ZM8 23L21 17Q24 16 24 19T21 23L8 29Z" fill="#fff" />
                </svg>
              </NavButton>
              <NavButton aria-label="Extensions">
                <svg width="34" height="34" viewBox="0 0 34 34" {...stroke} strokeWidth="3.500">
                  <path d="M3 7H12Q11 2 15 2T18 7H28V14Q32 14 32 18T28 22V31H3V24Q8 23 8 19T3 14Z" />
                </svg>
              </NavButton>
              <Divider $cell={36} />
              <NavButton aria-label="Downloads">
                <svg width="32" height="32" viewBox="0 0 32 32" {...stroke} strokeLinecap="butt" strokeLinejoin="miter" strokeWidth="3.500">
                  <path d="M16 0V20M7 12l9 9 9-9M2 22V30H30V22" />
                </svg>
              </NavButton>
              <Avatar aria-label="Account">
                <AvatarFace>R</AvatarFace>
              </Avatar>
              <NavButton aria-label="Browser menu">
                <svg width="6" height="28" viewBox="0 0 6 28" fill="currentColor">
                  <circle cx="3" cy="3" r="3" />
                  <circle cx="3" cy="14" r="3" />
                  <circle cx="3" cy="25" r="3" />
                </svg>
              </NavButton>
            </NavRow>
            <BookmarkBar aria-label="Bookmarks">
              <AppsButton aria-label="Apps">
                <svg width="28" height="28" viewBox="0 0 28 28" fill="none" stroke="#fff" strokeWidth="3">
                  <path d="M1.500 1.500h8.500v8.500H1.500zM18 1.500h8.500v8.500H18zM1.500 18h8.500v8.500H1.500zM18 18h8.500v8.500H18z" />
                </svg>
              </AppsButton>
              <Divider />
              <Bookmarks>
                {bookmarks.map((b, i) => (
                  <BookmarkCell key={i} $wide={b.wide}>
                    <Bookmark href="#" $tight={b.icon !== folder}>
                      {b.icon}
                      {b.label}
                    </Bookmark>
                  </BookmarkCell>
                ))}
              </Bookmarks>
              <MoreButton aria-label="More bookmarks">
                <svg width="22" height="18" viewBox="0 0 22 18" {...stroke} strokeLinecap="butt" strokeWidth="3">
                  <path d="M2 1l8 8-8 8M11 1l8 8-8 8" />
                </svg>
              </MoreButton>
              <Divider />
              <AllBookmarks href="#">
                <FolderIcon />
                All Bookmarks
              </AllBookmarks>
            </BookmarkBar>
          </Chrome>

          <PageRow>
            <Page>
              <SiteHeader>
                <SiteNav>
                  <Brand href="#">
                    <WolfLogo />
                    WOLFJOBS
                  </Brand>
                  <a href="#">My Applications</a>
                  <a href="#">All jobs</a>
                </SiteNav>
                <SiteNav $small>
                  <a href="#">Profile</a>
                  <a href="#">Upload Resume</a>
                  <a href="#">Notifications (2)</a>
                  <a href="#">Log Out</a>
                </SiteNav>
              </SiteHeader>
              <Column>
                <DropZone />
                <ButtonRow>
                  <Button $tone="blue">Upload Resume</Button>
                </ButtonRow>
                <p>Current Resume: python res2.pdf</p>
                <ButtonRow>
                  <Button $tone="red">View</Button>
                  <Button $tone="red">Generate Cover Letter</Button>
                </ButtonRow>
                <Letter>
                  <LetterTitle>Cover Letter</LetterTitle>
                  <LetterText>{letter}</LetterText>
                </Letter>
              </Column>
              <Floating>
                <ReaderButton aria-label="Reader">
                  <svg width="32" height="32" viewBox="0 0 32 32" fill="none" stroke="#f2efea" strokeWidth="2.500" strokeLinejoin="round">
                    <path d="M16 5Q14 2 10 2H4Q1.500 2 1.500 5V23Q1.500 26 4 26H12Q16 26 16 30 16 26 20 26H28Q30.500 26 30.500 23V5Q30.500 2 28 2H22Q18 2 16 5ZV29" />
                  </svg>
                </ReaderButton>
                <SideTab aria-label="Assistant">
                  <svg width="46" height="46" viewBox="-22 -22 44 44">
                    <circle r="22" fill="#28221f" />
                    <path d="M0-20A20 20 0 0 0 0 20Z" fill="#3558e0" />
                    <path d="M0-20A20 20 0 0 1 0 20Z" fill="#c8922a" />
                    <path d="M0 0Q-13-4-8-17 2-13 0 0Z" fill="#5a8cf8" stroke="#2340b0" />
                    <path d="M0 0Q-10 9-20 0-12-9 0 0Z" fill="#4a94f4" stroke="#2340b0" />
                    <path d="M0 0Q2 12-6 18-14 10 0 0Z" fill="#4aa2f0" stroke="#2340b0" />
                    <path d="M0 0Q-2-14 8-17 15-8 0 0Z" fill="#f28a26" stroke="#5a3a10" />
                    <path d="M0 0Q12-11 20-2 12 8 0 0Z" fill="#f6dc40" stroke="#5a3a10" />
                    <path d="M0 0Q11 8 7 18-3 14 0 0Z" fill="#f6dc40" stroke="#5a3a10" />
                    <path d="M0 0Q8-3 12 4 6 9 0 0Z" fill="#c63a26" />
                  </svg>
                </SideTab>
              </Floating>
            </Page>
            <ScrollTrack>
              <ScrollThumb />
            </ScrollTrack>
          </PageRow>
        </BrowserWindow>
      </Backdrop>

      <DockArea>
        <DockBar aria-label="Dock">
          {dockApps.map((a) => (
            <DockItem key={a.name} aria-label={a.name} $running={a.running}>
              {a.art}
            </DockItem>
          ))}
          <DockDivider />
          <DockItem aria-label="Documents">
            <Folders />
          </DockItem>
          <DockItem aria-label="Downloads">
            <Pdf />
          </DockItem>
          <DockItem aria-label="Trash">
            <Trash />
          </DockItem>
        </DockBar>
      </DockArea>
    </Desktop>
  );
}
